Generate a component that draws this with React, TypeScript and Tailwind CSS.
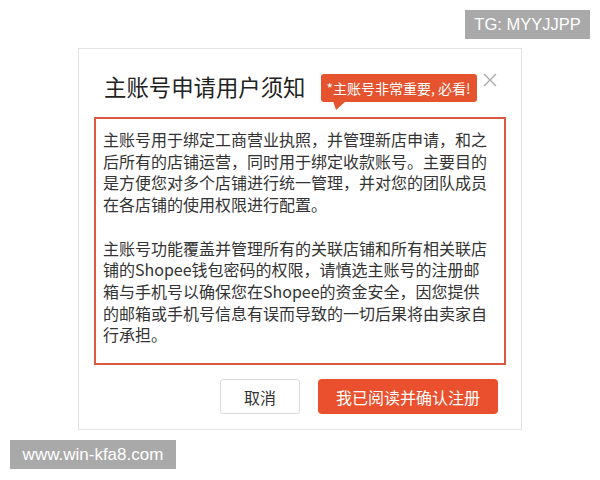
const PARA_1 = [
  "主账号用于绑定工商营业执照，并管理新店申请，和之",
  "后所有的店铺运营，同时用于绑定收款账号。主要目的",
  "是方便您对多个店铺进行统一管理，并对您的团队成员",
  "在各店铺的使用权限进行配置。",
];

const PARA_2 = [
  "主账号功能覆盖并管理所有的关联店铺和所有相关联店",
  "铺的Shopee钱包密码的权限，请慎选主账号的注册邮",
  "箱与手机号以确保您在Shopee的资金安全，因您提供",
  "的邮箱或手机号信息有误而导致的一切后果将由卖家自",
  "行承担。",
];

function Lines({ lines }: { lines: string[] }) {
  return (
    <div>
      {lines.map((l) => (
        <div key={l} className="whitespace-nowrap">
          {l}
        </div>
      ))}
    </div>
  );
}

export default function App() {
  return (
    <div
      className="relative w-[600px] h-[480px] bg-white overflow-hidden"
      style={{ fontFamily: '"Noto Sans CJK SC", "Noto Sans", sans-serif' }}
    >
      {/* 水印 */}
      <div
        className="absolute right-[10px] top-[10px] h-[29px] w-[125px] flex items-center justify-center bg-[#a9a9a9] text-white text-[16.5px]"
        style={{ fontFamily: '"Liberation Sans", Arial, sans-serif' }}
      >
        TG: MYYJJPP
      </div>
      <div
        className="absolute left-[10px] top-[440px] w-[166px] h-[29px] flex items-center justify-center bg-[#a9a9a9] text-white text-[17px]"
        style={{ fontFamily: '"Liberation Sans", Arial, sans-serif' }}
      >
        www.win-kfa8.com
      </div>

      <div className="pt-[48px] flex justify-center">
        <div className="w-[444px] h-[382px] border border-[#e3e3e3] bg-white flex flex-col">
          {/* 标题行 */}
          <div className="relative flex items-start pl-[25px] pt-[22px] h-[68px]">
            <h1 className="text-[22.4px] leading-[30px] text-[#222] font-normal">主账号申请用户须知</h1>
            <div className="relative ml-[15px] mt-[3px]">
              <div className="h-[28px] px-[6px] flex items-center rounded-[3px] bg-[#e5532f] text-white text-[14px] whitespace-nowrap">
                *主账号非常重要, 必看!
              </div>
              <svg className="absolute left-[12px] top-[27px]" width="14" height="10" viewBox="0 0 14 10">
                <polygon points="0,0 13,0 3,9" fill="#e5532f" />
              </svg>
            </div>
            <svg
              className="absolute right-[24px] top-[24px]"
              width="14"
              height="14"
              viewBox="0 0 14 14"
              stroke="#a8a8a8"
              strokeWidth="1.3"
            >
              <line x1="1" y1="1" x2="13" y2="13" />
              <line x1="13" y1="1" x2="1" y2="13" />
            </svg>
          </div>

          {/* 须知内容 */}
          <div className="mx-[15px] h-[248px] border-2 border-[#db5a3f] pl-[7px] pt-[10px] text-[16px] leading-[21.7px] text-[#333]">
            <Lines lines={PARA_1} />
            <div className="h-[21.7px]" />
            <Lines lines={PARA_2} />
          </div>

          {/* 按钮 */}
          <div className="flex justify-end gap-[18px] pr-[23px] mt-[14px]">
            <button className="w-[80px] h-[35px] rounded-[3px] border border-[#dcdcdc] bg-white text-[16px] text-[#333]">
              取消
            </button>
            <button className="w-[180px] h-[35px] rounded-[4px] bg-[#ea4f2e] text-[16px] text-white">
              我已阅读并确认注册
            </button>
          </div>
        </div>
      </div>
    </div>
  );
}
